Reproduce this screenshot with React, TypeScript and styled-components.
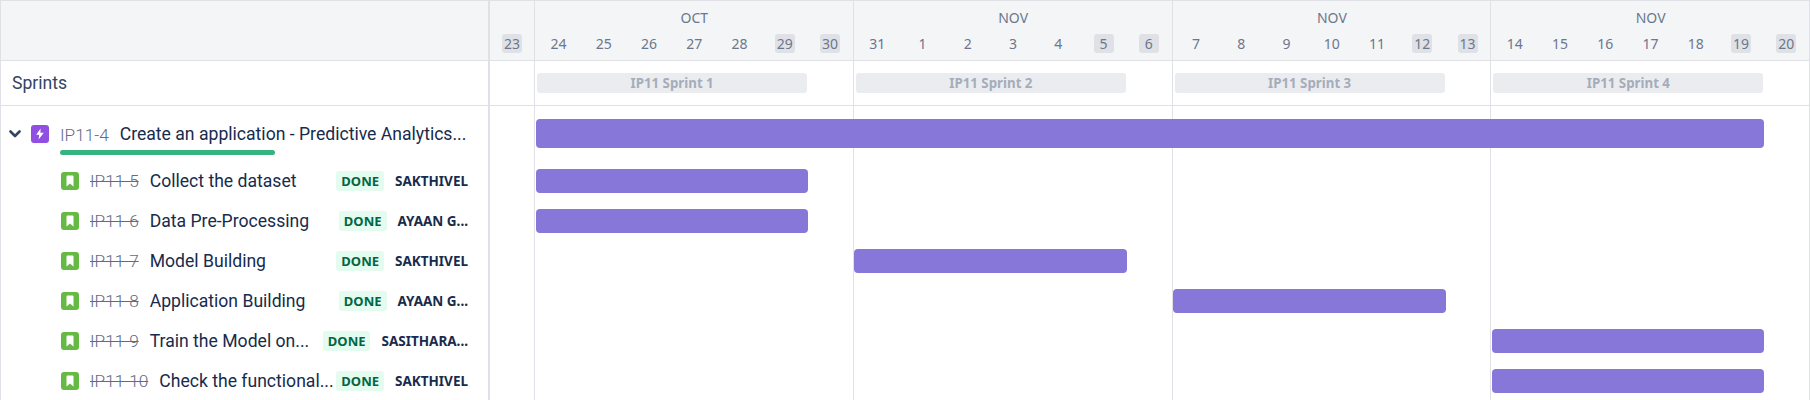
import React from "react";
import styled, { createGlobalStyle } from "styled-components";

const Global = createGlobalStyle`
  html, body { margin: 0; padding: 0; background: #fff; overflow: hidden; }
  body { font-family: "Noto Sans", sans-serif; }
`;

const LINE = "#dfe1e6";
const TEXT_FONT = `"Roboto", "Liberation Sans", sans-serif`;

const Root = styled.div`
  width: 1810px;
  height: 400px;
  overflow: hidden;
  display: grid;
  grid-template-columns: 490px 1320px;
  box-sizing: border-box;
  border-top: 1px solid ${LINE};
`;

const Left = styled.div`
  box-sizing: border-box;
  border-left: 1px solid ${LINE};
  border-right: 2px solid ${LINE};
  display: flex;
  flex-direction: column;
`;

const LeftHead = styled.div`
  height: 59px;
  flex: none;
  background: #f4f5f7;
  border-bottom: 1px solid ${LINE};
`;

const SprintLabel = styled.div`
  flex: none;
  display: flex;
  align-items: center;
  padding: 0 0 1px 11px;
  box-sizing: border-box;
  height: 45px;
  font-family: ${TEXT_FONT};
  font-size: 17.6px;
  color: #344563;
  border-bottom: 1px solid ${LINE};
`;

const EpicRow = styled.div`
  position: relative;
  height: 55px;
  flex: none;
  display: flex;
  align-items: flex-start;
  padding-top: 19px;
  box-sizing: border-box;
`;

const Chevron = styled.svg`
  width: 12px;
  height: 8px;
  margin: 5px 10px 0 8px;
  flex: none;
`;

const IconBox = styled.span<{ $bg: string }>`
  width: 18px;
  height: 18px;
  flex: none;
  border-radius: 3px;
  background: ${(p) => p.$bg};
  display: flex;
  align-items: center;
  justify-content: center;
`;

const EpicKey = styled.span`
  margin-left: 11px;
  font-family: ${TEXT_FONT};
  font-size: 17.2px;
  font-weight: 300;
  line-height: 20px;
  color: #5e6c84;
`;

const EpicSummary = styled.span`
  margin-left: 11px;
  font-family: ${TEXT_FONT};
  font-size: 17.6px;
  line-height: 18px;
  color: #172b4d;
  white-space: nowrap;
`;

const Progress = styled.div`
  position: absolute;
  left: 59px;
  top: 44px;
  width: 215px;
  height: 5px;
  border-radius: 3px;
  background: #36b37e;
`;

const StoryRow = styled.div`
  height: 40px;
  flex: none;
  display: flex;
  align-items: center;
  padding: 0 20px 0 60px;
`;

const StoryKey = styled.span`
  margin-left: 11px;
  font-family: ${TEXT_FONT};
  font-size: 17.2px;
  font-weight: 300;
  color: #5e6c84;
  text-decoration: line-through;
  flex: none;
`;

const StorySummary = styled.span`
  margin-left: 11px;
  font-family: ${TEXT_FONT};
  font-size: 17.6px;
  color: #172b4d;
  white-space: nowrap;
  flex: 1;
  min-width: 0;
`;

const Lozenge = styled.span`
  flex: none;
  height: 20px;
  box-sizing: border-box;
  padding: 0 5px;
  display: flex;
  align-items: center;
  border-radius: 3px;
  background: #e3fcef;
  color: #006644;
  font-weight: 700;
  font-size: 13px;
`;

const Assignee = styled.span`
  margin-left: 11px;
  flex: none;
  font-weight: 700;
  font-size: 13.5px;
  color: #172b4d;
`;

const Timeline = styled.div`
  display: flex;
  flex-direction: column;
  box-sizing: border-box;
  border-right: 1px solid ${LINE};
`;

const Head = styled.div`
  height: 59px;
  flex: none;
  background: #f4f5f7;
  border-bottom: 1px solid ${LINE};
  display: grid;
  grid-template-columns: 44px repeat(4, 1fr);
`;

const WeekHead = styled.div<{ $first?: boolean }>`
  display: flex;
  flex-direction: column;
  border-left: ${(p) => (p.$first ? "0" : `1px solid ${LINE}`)};
  padding-left: ${(p) => (p.$first ? "0" : "1px")};
  min-width: 0;
`;

const Month = styled.div`
  height: 32px;
  display: flex;
  align-items: center;
  justify-content: center;
  font-size: 14px;
  color: #6b778c;
`;

const Days = styled.div`
  display: flex;
  margin-top: 1px;
`;

const Day = styled.div`
  flex: 1;
  min-width: 0;
  display: flex;
  justify-content: center;
`;

const DayNum = styled.span<{ $off?: boolean }>`
  width: 20px;
  height: 19px;
  display: flex;
  align-items: center;
  justify-content: center;
  border-radius: 3px;
  background: ${(p) => (p.$off ? "#dfe1e6" : "transparent")};
  font-size: 14px;
  color: #6b778c;
`;

const Lines = styled.div`
  flex: 1;
  display: flex;
  flex-direction: column;
  background-image: linear-gradient(${LINE}, ${LINE}), linear-gradient(${LINE}, ${LINE}),
    linear-gradient(${LINE}, ${LINE}), linear-gradient(${LINE}, ${LINE});
  background-size: 1px 100%;
  background-repeat: no-repeat;
  background-position: 44px 0, 363px 0, 682px 0, 1000px 0;
`;

const Grid = styled.div<{ $h: number; $border?: boolean }>`
  height: ${(p) => p.$h}px;
  flex: none;
  display: grid;
  grid-template-columns: 44px repeat(28, 1fr);
  align-items: center;
  border-bottom: ${(p) => (p.$border ? `1px solid ${LINE}` : "0")};
`;

const SprintBar = styled.div<{ $start: number }>`
  grid-column: ${(p) => p.$start} / span 6;
  margin-left: 3px;
  height: 20px;
  border-radius: 3px;
  background: #ebecf0;
  color: #a5adba;
  display: flex;
  align-items: center;
  justify-content: center;
  font-weight: 700;
  font-size: 13.3px;
`;

const Bar = styled.div<{ $start: number; $span: number; $h: number }>`
  grid-column: ${(p) => p.$start} / span ${(p) => p.$span};
  margin-left: 1.5px;
  margin-right: -1px;
  height: ${(p) => p.$h}px;
  border-radius: 4px;
  background: #8777d9;
`;

const Bolt = () => (
  <svg width="10" height="12" viewBox="0 0 10 12">
    <path d="M5.6 0.5 1.2 6.8h3L3.6 11.5 8.8 4.8H5.4z" fill="#fff" />
  </svg>
);

const Mark = () => (
  <svg width="10" height="12" viewBox="0 0 10 12">
    <path d="M1.5 1.5A1 1 0 0 1 2.5.5h5a1 1 0 0 1 1 1v10L5 8.6 1.5 11.5z" fill="#fff" />
  </svg>
);

const weeks = [
  { m: "OCT", d: [24, 25, 26, 27, 28, 29, 30] },
  { m: "NOV", d: [31, 1, 2, 3, 4, 5, 6] },
  { m: "NOV", d: [7, 8, 9, 10, 11, 12, 13] },
  { m: "NOV", d: [14, 15, 16, 17, 18, 19, 20] },
];

const stories = [
  { k: "IP11-5", s: "Collect the dataset", a: "SAKTHIVEL", st: 2 },
  { k: "IP11-6", s: "Data Pre-Processing", a: "AYAAN G...", st: 2 },
  { k: "IP11-7", s: "Model Building", a: "SAKTHIVEL", st: 9 },
  { k: "IP11-8", s: "Application Building", a: "AYAAN G...", st: 16 },
  { k: "IP11-9", s: "Train the Model on...", a: "SASITHARA...", st: 23 },
  { k: "IP11-10", s: "Check the functional...", a: "SAKTHIVEL", st: 23 },
];

export default function App() {
  return (
    <>
      <Global />
      <Root>
        <Left>
          <LeftHead />
          <SprintLabel>Sprints</SprintLabel>
          <EpicRow>
            <Chevron viewBox="0 0 12 8">
              <path d="M1.5 1.5 6 6l4.5-4.5" fill="none" stroke="#344563" strokeWidth="2.6" strokeLinecap="round" strokeLinejoin="round" />
            </Chevron>
            <IconBox $bg="#904ee2"><Bolt /></IconBox>
            <EpicKey>IP11-4</EpicKey>
            <EpicSummary>Create an application - Predictive Analytics...</EpicSummary>
            <Progress />
          </EpicRow>
          {stories.map((r) => (
            <StoryRow key={r.k}>
              <IconBox $bg="#65ba43"><Mark /></IconBox>
              <StoryKey>{r.k}</StoryKey>
              <StorySummary>{r.s}</StorySummary>
              <Lozenge>DONE</Lozenge>
              <Assignee>{r.a}</Assignee>
            </StoryRow>
          ))}
        </Left>
        <Timeline>
          <Head>
            <WeekHead $first>
              <Month />
              <Days>
                <Day><DayNum $off>23</DayNum></Day>
              </Days>
            </WeekHead>
            {weeks.map((w, i) => (
              <WeekHead key={i}>
                <Month>{w.m}</Month>
                <Days>
                  {w.d.map((d, j) => (
                    <Day key={d}><DayNum $off={j > 4}>{d}</DayNum></Day>
                  ))}
                </Days>
              </WeekHead>
            ))}
          </Head>
          <Lines>
            <Grid $h={44} $border>
              {[2, 9, 16, 23].map((s, i) => (
                <SprintBar key={s} $start={s}>IP11 Sprint {i + 1}</SprintBar>
              ))}
            </Grid>
            <Grid $h={55}>
              <Bar $start={2} $span={27} $h={29} />
            </Grid>
            {stories.map((r) => (
              <Grid key={r.k} $h={40}>
                <Bar $start={r.st} $span={6} $h={24} />
              </Grid>
            ))}
          </Lines>
        </Timeline>
      </Root>
    </>
  );
}
